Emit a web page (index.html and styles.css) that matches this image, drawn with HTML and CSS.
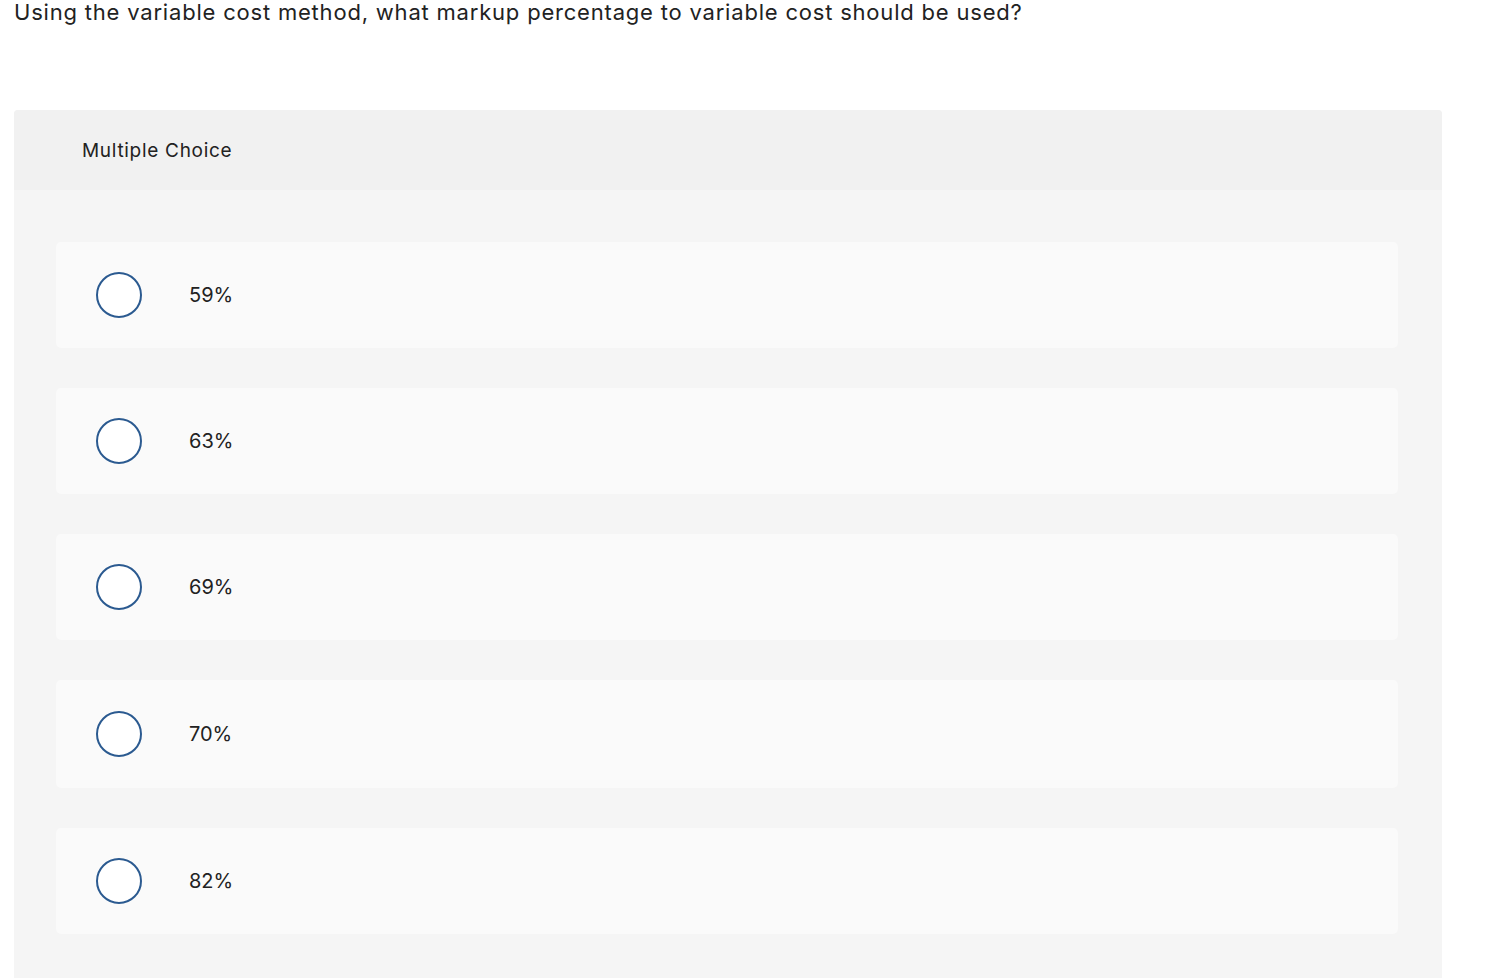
FILE: index.html
```html
<!DOCTYPE html>
<html>
<head>
<meta charset="utf-8">
<link rel="stylesheet" href="styles.css">
</head>
<body>
<p class="question">Using the variable cost method, what markup percentage to variable cost should be used?</p>
<div class="card">
  <div class="card-header">Multiple Choice</div>
  <div class="options">
    <div class="option"><span class="radio"></span><span class="label">59%</span></div>
    <div class="option"><span class="radio"></span><span class="label">63%</span></div>
    <div class="option"><span class="radio"></span><span class="label">69%</span></div>
    <div class="option option-tall"><span class="radio"></span><span class="label">70%</span></div>
    <div class="option"><span class="radio"></span><span class="label">82%</span></div>
  </div>
</div>
</body>
</html>
```
FILE: styles.css
```css
html, body {
  margin: 0;
  padding: 0;
  background: #ffffff;
}
body {
  font-family: "Inter", "Liberation Sans", sans-serif;
  color: #222222;
  padding: 0 54px 0 14px;
  overflow: hidden;
  height: 978px;
}
.question {
  margin: 0;
  font-size: 22px;
  line-height: 24px;
  letter-spacing: 0.8px;
  color: #222;
  height: 110px;
}
.card {
  background: #f5f5f5;
  border-radius: 4px 4px 0 0;
  overflow: hidden;
}
.card-header {
  background: #f1f1f1;
  height: 80px;
  display: flex;
  align-items: center;
  padding-left: 68px;
  font-size: 19px;
  letter-spacing: 0.7px;
  color: #222;
}
.options {
  display: flex;
  flex-direction: column;
  gap: 40px;
  padding: 52px 44px 60px 42px;
}
.option {
  background: #fafafa;
  border-radius: 5px;
  height: 106px;
  display: flex;
  align-items: center;
  padding-left: 40px;
}
.option-tall {
  height: 108px;
}
.radio {
  width: 42px;
  height: 42px;
  border: 2px solid #2b5a90;
  border-radius: 50%;
  background: #fff;
  flex: none;
}
.label {
  margin-left: 47px;
  font-size: 20px;
  color: #222;
}
```
